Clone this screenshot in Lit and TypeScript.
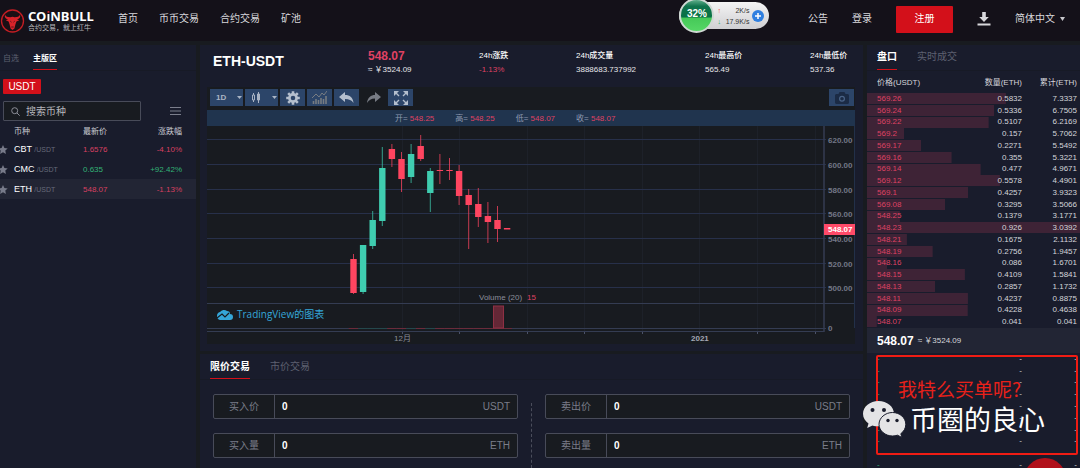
import { LitElement, html, svg, css } from "lit";
import { customElement } from "lit/decorators.js";
import { classMap } from "lit/directives/class-map.js";
import { styleMap } from "lit/directives/style-map.js";

const shared = css`
  * {
    box-sizing: border-box;
  }
  a {
    color: inherit;
    text-decoration: none;
  }
  button,
  input,
  select {
    font: inherit;
    color: inherit;
    background: none;
    border: 0;
    margin: 0;
    padding: 0;
    border-radius: 0;
    outline: none;
  }
  select {
    appearance: none;
  }
  table {
    border-collapse: collapse;
    width: 100%;
  }
  th {
    font-weight: 400;
  }
  svg {
    display: block;
    flex: none;
  }
  .tabs {
    display: flex;
    height: 26px;
    border-bottom: 1px solid #171a26;
  }
  .tab {
    height: 25px;
    color: #5d6070;
    white-space: nowrap;
    border-bottom: 1px solid transparent;
  }
  .tab.on {
    color: #fff;
    font-weight: 700;
    border-color: #d3101a;
  }
  .up {
    color: #33b276;
  }
  .down {
    color: #df4263;
  }
`;

@customElement("top-bar")
class TopBar extends LitElement {
  static styles = [
    shared,
    css`
      :host {
        display: flex;
        align-items: center;
        height: 41px;
        padding-right: 15px;
        background: #141119;
        color: #d8d8dc;
        font-size: 10px;
        line-height: 14px;
        white-space: nowrap;
        position: relative;
      }
      .brand {
        display: flex;
        align-items: center;
        gap: 3px;
        width: 118px;
        color: #fff;
      }
      .name {
        display: block;
        font: 700 13px/14px "Noto Sans", sans-serif;
      }
      .i {
        color: transparent;
        background: linear-gradient(#e0202a 6px, #fff 6px);
        background-clip: text;
        -webkit-background-clip: text;
      }
      .slogan {
        display: block;
        color: #b9b9bd;
        font-size: 7px;
        line-height: 10px;
      }
      nav {
        display: flex;
        gap: 21px;
        flex: 1;
        padding-bottom: 4px;
      }
      .tools {
        display: flex;
        align-items: center;
        gap: 24px;
        padding-bottom: 3px;
      }
      .join {
        width: 57px;
        height: 27px;
        background: #d3101a;
        color: #fff;
        border-radius: 1px;
      }
      .lang {
        display: flex;
        align-items: center;
        gap: 5px;
      }
      .meter {
        position: absolute;
        left: calc(63% - 1px);
        top: 2px;
        width: 90px;
        height: 27px;
        border-radius: 14px;
        background: linear-gradient(#f4f4f4, #cfcfd2);
        display: flex;
        align-items: center;
        gap: 3px;
        padding-right: 5px;
        color: #333;
        font-size: 7px;
        line-height: 11px;
      }
      .ball {
        width: 35px;
        height: 35px;
        flex: none;
        margin: -4px 0;
        border-radius: 50%;
        border: 2px solid #cfd8d3;
        background: linear-gradient(#5fae8b 0, #10744d 20%, #087045 56%, #45c858 57%, #55d765 100%);
        color: #fff;
        font-size: 10px;
        font-weight: 700;
        line-height: 27px;
        text-align: center;
      }
      .speed {
        flex: 1;
        display: grid;
        grid-template-columns: auto 1fr;
        text-align: right;
      }
      .red {
        color: #ef4136;
      }
      .green {
        color: #1fae57;
      }
    `,
  ];
  render() {
    return html`
      <a class="brand" href="#">
        <svg width="25" height="26" viewBox="0 0 25 26">
          <circle cx="12.5" cy="13" r="11" fill="#1b0f14" stroke="#c41e24" stroke-width="1.3" />
          <path
            fill="#d8232a"
            d="M5 6.500C4.300 9.500 5.400 10.800 8 11.200L5.800 12.200 8.600 13.400 9.600 16.600 10.600 20.400 12.500 22 14.400 20.400 15.400 16.600 16.400 13.400 19.200 12.200 17 11.200C19.600 10.800 20.700 9.500 20 6.500 19.400 8.600 17.500 9.200 14.800 9.200L12.500 8.800 10.200 9.200C7.500 9.200 5.600 8.600 5 6.500Z"
          />
          <path d="M10.300 13.200l1.200 1M14.700 13.200l-1.200 1M11.300 19h2.400" stroke="#1b0f14" stroke-width=".7" />
        </svg>
        <span><span class="name">CO<span class="i">i</span>NBULL</span><span class="slogan">合约交易，就上红牛</span></span>
      </a>
      <nav>
        <a href="#">首页</a><a href="#">币币交易</a><a href="#">合约交易</a><a href="#">矿池</a>
      </nav>
      <div class="tools">
        <a href="#">公告</a><a href="#">登录</a>
        <button class="join">注册</button>
        <button aria-label="下载">
          <svg width="14" height="14" viewBox="0 0 14 14" fill="#d8d8dc">
            <path d="M5.200 0h3.600v5h3L7 10 2.200 5h3zM.5 11.500h13v2H.5z" />
          </svg>
        </button>
        <label class="lang">
          <select aria-label="语言"><option>简体中文</option></select>
          <svg width="5" height="4" viewBox="0 0 5 4"><path d="M0 0h5L2.500 4z" fill="#c8c8cc" /></svg>
        </label>
      </div>
      <div class="meter">
        <span class="ball">32%</span>
        <span class="speed"
          ><b class="red">↑</b><span>2K/s</span><b class="green">↓</b><span>17.9K/s</span></span
        >
        <svg width="12" height="12" viewBox="0 0 12 12">
          <circle cx="6" cy="6" r="6" fill="#2f7fe0" />
          <path d="M6 3v6M3 6h6" stroke="#fff" stroke-width="1.500" />
        </svg>
      </div>
    `;
  }
}

const coins = [
  { name: "CBT", price: "1.6576", change: "-4.10%", tone: "down" },
  { name: "CMC", price: "0.635", change: "+92.42%", tone: "up" },
  { name: "ETH", price: "548.07", change: "-1.13%", tone: "down" },
];

@customElement("market-list")
class MarketList extends LitElement {
  static styles = [
    shared,
    css`
      :host {
        display: block;
        background: #191c2c;
        font-size: 8px;
      }
      .tabs {
        padding-left: 3px;
        gap: 14px;
      }
      .quote {
        display: block;
        margin: 8px 3px 7px;
        width: 38px;
        height: 15px;
        background: #d3101a;
        color: #fff;
        font-size: 10px;
        line-height: 15px;
        border-radius: 1px;
      }
      .find {
        display: flex;
        justify-content: space-between;
        align-items: center;
        padding: 0 15px 0 3px;
      }
      .box {
        display: flex;
        align-items: center;
        gap: 6px;
        width: 138px;
        height: 20px;
        padding: 0 7px;
        border: 1px solid #484b59;
        border-radius: 1px;
        background: #181b20;
        font-size: 10px;
      }
      .box input {
        width: 100px;
      }
      .box input::placeholder {
        color: #b5b6bb;
        opacity: 1;
      }
      table {
        table-layout: fixed;
      }
      tr {
        height: 20px;
      }
      thead tr {
        height: 18px;
      }
      td,
      th {
        padding: 0;
        text-align: left;
        color: #c9cad0;
      }
      .star {
        width: 14px;
      }
      .coin {
        width: 69px;
      }
      td.up {
        color: #33b276;
      }
      td.down {
        color: #d84061;
      }
      .change {
        text-align: right;
        padding-right: 14px;
      }
      .sym {
        font-size: 9px;
        color: #fff;
      }
      .unit {
        font-size: 7px;
        color: #666a7a;
      }
      .current {
        background: #222534;
      }
    `,
  ];
  render() {
    return html`
      <div class="tabs"><button class="tab">自选</button><button class="tab on">主版区</button></div>
      <button class="quote">USDT</button>
      <div class="find">
        <label class="box">
          <svg width="9" height="9" viewBox="0 0 9 9" fill="none" stroke="#8b8d97">
            <circle cx="3.700" cy="3.700" r="3" />
            <path d="M6 6l2.700 2.700" />
          </svg>
          <input placeholder="搜索币种" aria-label="搜索币种" />
        </label>
        <button aria-label="菜单">
          <svg width="11" height="8" viewBox="0 0 11 8"><path d="M0 .5h11M0 4h11M0 7.500h11" stroke="#7b7e8c" /></svg>
        </button>
      </div>
      <table>
        <thead>
          <tr>
            <th class="star"></th>
            <th class="coin">币种</th>
            <th>最新价</th>
            <th class="change">涨跌幅</th>
          </tr>
        </thead>
        <tbody>
          ${coins.map(
            (c) => html`<tr class=${classMap({ current: c.name === "ETH" })}>
              <td class="star">
                <svg width="8" height="9" viewBox="2 0 8 9">
                  <path d="M5 0l1.400 3 3.300.4-2.400 2.200.6 3.300L5 7.300 2.100 8.900l.6-3.300L.3 3.400 3.600 3z" fill="#777a89" />
                </svg>
              </td>
              <td><span class="sym">${c.name}</span> <span class="unit">/USDT</span></td>
              <td class=${c.tone}>${c.price}</td>
              <td class="change ${c.tone}">${c.change}</td>
            </tr>`
          )}
        </tbody>
      </table>
    `;
  }
}

// [open/close top, bottom, wick top, wick bottom, rising]
const candles: [number, number, number, number, boolean][] = [
  [133, 167, 128, 168, false],
  [119, 166, 119, 168, true],
  [94, 120, 85, 123, true],
  [42, 95, 21, 100, true],
  [23, 33, 18, 41, false],
  [33, 53, 26, 66, false],
  [28, 51, 18, 57, true],
  [20, 33, 9, 35, false],
  [45, 67, 42, 86, true],
  [44, 45, 28, 58, false],
  [44, 45, 32, 54, false],
  [45, 70, 39, 79, false],
  [69, 79, 63, 123, false],
  [78, 91, 62, 101, false],
  [90, 96, 76, 117, false],
  [94, 103, 80, 116, false],
  [102, 103.5, 102, 103, false],
];
const levels: [string, number][] = [
  ["620.00", 14],
  ["600.00", 39],
  ["580.00", 64],
  ["560.00", 88],
  ["540.00", 113],
  ["520.00", 138],
  ["500.00", 162],
];
const ticks = [195, 252, 320, 377, 435, 492, 550, 608];

@customElement("price-chart")
class PriceChart extends LitElement {
  static styles = [
    shared,
    css`
      :host {
        display: block;
        background: #181b20;
        font-size: 8px;
      }
      .bar {
        display: flex;
        align-items: center;
        gap: 2px;
        height: 23px;
        padding: 0 1px 2px 3px;
      }
      .btn {
        display: flex;
        align-items: center;
        justify-content: center;
        width: 25px;
        height: 17px;
        background: #2c4569;
        color: #aab4c4;
      }
      .wide {
        width: 33px;
        justify-content: space-between;
        padding: 0 1px 0 6px;
      }
      .wide select {
        width: 18px;
        font-weight: 700;
      }
      .plain {
        background: none;
      }
      .last {
        margin-left: auto;
      }
      .legend {
        display: flex;
        gap: 21px;
        height: 16px;
        padding-left: 29%;
        line-height: 18px;
        background: #20344e;
        color: #8f9bb0;
        white-space: nowrap;
      }
      .plot {
        width: 100%;
        height: auto;
      }
      .axis {
        fill: #737787;
        font-weight: 700;
      }
      .year {
        fill: #a4a8b4;
        font-weight: 700;
      }
      .tag {
        fill: #fff;
        font-weight: 700;
      }
      .note {
        fill: #8b8e9a;
      }
      .hot {
        fill: #df4263;
      }
      .tv {
        fill: #35a6d8;
        font: 10px "Open Sans", "Noto Sans CJK SC", sans-serif;
      }
    `,
  ];
  private caret = () =>
    html`<svg width="5" height="3" viewBox="0 0 5 3"><path d="M0 0h5L2.500 3z" fill="#aab4c4" /></svg>`;
  render() {
    return html`
      <div class="bar">
        <label class="btn wide"><select aria-label="周期"><option>1D</option></select>${this.caret()}</label>
        <button class="btn wide" aria-label="图表类型">
          <svg width="10" height="11" viewBox="0 0 10 11" stroke="#aab4c4">
            <path d="M2.500 1v9M7.500 0v11" />
            <path d="M1.500 3h2v5h-2z" fill="#2c4569" />
            <path d="M6.500 2h2v6h-2z" fill="#aab4c4" />
          </svg>
          ${this.caret()}
        </button>
        <button class="btn" aria-label="设置">
          <svg width="14" height="14" viewBox="-7 -7 14 14">
            <circle r="3.600" fill="none" stroke="#b4bfce" stroke-width="2.600" />
            ${[0, 45, 90, 135].map(
              (a) => svg`<path d="M0-6.800v2.800M0 4v2.800" stroke="#b4bfce" stroke-width="2.600" transform="rotate(${a})"/>`
            )}
          </svg>
        </button>
        <button class="btn" aria-label="指标">
          <svg width="15" height="13" viewBox="0 0 15 13" fill="none" stroke="#777c82">
            <path d="M1.500 13v-3M4 13V8M6.500 13V9M9 13V7M11.500 13V8M14 13V5" stroke-width="1.600" />
            <path d="M0 7l4-4 3 3 3-4 2 2 3-4" />
          </svg>
        </button>
        <button class="btn" aria-label="撤销">
          <svg width="15" height="11" viewBox="0 0 15 11"><path d="M6 0v3c5 0 8 2.500 8.500 8C12.500 8 10 7 6 7v3L0 5z" fill="#b4bfce" /></svg>
        </button>
        <button class="btn plain" aria-label="重做">
          <svg width="14" height="11" viewBox="0 0 14 11"><path d="M8 0v3C4 3 .6 5.500 0 11c2-3 4-4.500 8-4.500V10l6-5z" fill="#777b84" /></svg>
        </button>
        <button class="btn" aria-label="全屏">
          <svg width="14" height="14" viewBox="0 0 14 14" fill="#b4bfce" stroke="#b4bfce" stroke-width="1.400">
            <path d="M0 0h5L0 5zM14 0v5L9 0zM0 14V9l5 5zM14 14H9l5-5z" stroke="none" />
            <path d="M2 2l3 3M12 2L9 5M2 12l3-3M12 12L9 9" />
          </svg>
        </button>
        <button class="btn last" aria-label="截图">
          <svg width="14" height="12" viewBox="0 0 14 12">
            <path d="M4.500 0h5l1 2H13l1 1v8l-1 1H1l-1-1V3l1-1h2.500z" fill="#1b2b45" />
            <circle cx="7" cy="6.700" r="2.400" fill="none" stroke="#4a6387" stroke-width="1.200" />
          </svg>
        </button>
      </div>
      <div class="legend">
        ${[["开", "548.25"], ["高", "548.25"], ["低", "548.07"], ["收", "548.07"]].map(
          ([k, v]) => html`<span>${k}= <span class="down">${v}</span></span>`
        )}
      </div>
      <svg class="plot" viewBox="0 0 648 218">
        ${ticks.map(
          (x) => svg`<path d="M${x + 0.5} 0V205" stroke="#1d2129"/><path d="M${x + 0.5} 205v3" stroke="#4b5268"/>`
        )}
        ${levels.map(
          ([t, y]) => svg`<path d="M0 ${y - 0.5}H619" stroke="#27304a"/>
            <text class="axis" x="621" y="${y + 3}">${t}</text>`
        )}
        <path d="M0 177.500H648M0 202.500H619M0 205.500H617" stroke="#343c52" fill="none" />
        <path d="M617 0V206" stroke="#343c52" stroke-width="1.500" />
        <path d="M647.500 0V202" stroke="#223049" />
        <text class="axis" x="621" y="205">0</text>
        ${candles.map(([t, b, h, l, up], i) => {
          const x = 146.5 + i * 9.6;
          const c = up ? "#3fcdb0" : "#ff4560";
          return svg`<path d="M${x} ${h}V${l}" stroke="${c}" stroke-opacity=".75"/>
            <rect x="${x - 3.2}" y="${t}" width="6.400" height="${b - t}" fill="${c}"/>
            <path d="M${x - 4.8} 202.500h9.600" stroke="${up ? "#24484c" : "#6b2b3b"}"/>`;
        })}
        <rect x="286.500" y="180" width="10" height="22" fill="#642736" stroke="#8f3044" />
        <rect x="617" y="98" width="31" height="11" fill="#ff4a68" />
        <text class="tag" x="621" y="106">548.07</text>
        <text class="note" x="272" y="174">Volume (20)</text>
        <text class="hot" x="320" y="174">15</text>
        <path d="M10 190a4 4 0 0 1 3-4 5 5 0 0 1 7-1 3 3 0 0 1 3 3 3 3 0 0 1 0 6H13a4 4 0 0 1-3-4z" fill="#35a6d8" />
        <path d="M10 192l5-4 3 3 4-4" fill="none" stroke="#181b20" stroke-width="1.200" />
        <a href="#"><text class="tv" x="30" y="192">TradingView的图表</text></a>
        <text class="note" x="187" y="215">12月</text>
        <text class="year" x="484" y="215">2021</text>
      </svg>
    `;
  }
}

const stats = [
  ["24h涨跌", "-1.13%"],
  ["24h成交量", "3888683.737992"],
  ["24h最高价", "565.49"],
  ["24h最低价", "537.36"],
];
const sides = [
  { id: "buy", fields: [["买入价", "USDT"], ["买入量", "ETH"]] },
  { id: "sell", fields: [["卖出价", "USDT"], ["卖出量", "ETH"]] },
];

@customElement("trade-desk")
class TradeDesk extends LitElement {
  static styles = [
    shared,
    css`
      :host {
        display: grid;
        grid-template-rows: auto 1fr;
        gap: 3px;
        min-width: 0;
      }
      .panel {
        background: #191c2c;
      }
      .market {
        padding: 0 8px 7px 7px;
      }
      .head {
        display: grid;
        grid-template-columns: 155fr 111fr 97fr 129fr 105fr 45fr;
        height: 42px;
        padding: 4px 0 0 6px;
        font-size: 8px;
        line-height: 14px;
        color: #e6e6ea;
        white-space: nowrap;
      }
      .pair {
        margin: 0;
        font-size: 14px;
        line-height: 25px;
        color: #fff;
      }
      .head > div > * {
        display: block;
      }
      .last {
        font-size: 12px;
        font-weight: 700;
      }
      .key {
        font-weight: 500;
        color: #fff;
      }
      .tabs {
        padding-left: 10px;
        gap: 20px;
        font-size: 10px;
        line-height: 26px;
      }
      .forms {
        display: grid;
        grid-template-columns: 1fr 1px 1fr;
        gap: 13px;
        padding: 14px 13px 10px;
        font-size: 10px;
      }
      .side {
        display: grid;
        gap: 14px;
        align-content: start;
      }
      .rule {
        margin: 9px 0 -10px;
        border-left: 1px dashed #4a4d5b;
      }
      .field {
        display: grid;
        grid-template-columns: 61px 1fr auto;
        align-items: center;
        height: 25px;
        padding-right: 7px;
        border: 1px solid #484b59;
        border-radius: 2px;
        background: #181b20;
        color: #7a7d89;
      }
      .field label {
        line-height: 23px;
        text-align: center;
        border-right: 1px solid #484b59;
      }
      .field input {
        min-width: 0;
        padding-left: 7px;
        color: #fff;
        font-weight: 700;
      }
    `,
  ];
  render() {
    return html`
      <section class="panel market">
        <div class="head">
          <h1 class="pair">ETH-USDT</h1>
          <div><span class="last down">548.07</span><span>≈ ￥3524.09</span></div>
          ${stats.map(
            ([k, v], i) => html`<div>
              <span class="key">${k}</span><span class=${classMap({ down: i === 0 })}>${v}</span>
            </div>`
          )}
        </div>
        <price-chart></price-chart>
      </section>
      <section class="panel">
        <div class="tabs"><button class="tab on">限价交易</button><button class="tab">市价交易</button></div>
        <form class="forms">
          ${sides.map(
            (s, n) => html`${n ? html`<div class="rule"></div>` : ""}
              <div class="side">
                ${s.fields.map(
                  ([label, unit], i) => html`<div class="field">
                    <label for="${s.id}${i}">${label}</label>
                    <input id="${s.id}${i}" value="0" />
                    <span>${unit}</span>
                  </div>`
                )}
              </div>`
          )}
        </form>
      </section>
    `;
  }
}

const asks = [
  ["569.26", "0.5832", "7.3337"],
  ["569.24", "0.5336", "6.7505"],
  ["569.22", "0.5107", "6.2169"],
  ["569.2", "0.157", "5.7062"],
  ["569.17", "0.2271", "5.5492"],
  ["569.16", "0.355", "5.3221"],
  ["569.14", "0.477", "4.9671"],
  ["569.12", "0.5578", "4.4901"],
  ["569.1", "0.4257", "3.9323"],
  ["569.08", "0.3295", "3.5066"],
  ["548.25", "0.1379", "3.1771"],
  ["548.23", "0.926", "3.0392"],
  ["548.21", "0.1675", "2.1132"],
  ["548.19", "0.2756", "1.9457"],
  ["548.16", "0.086", "1.6701"],
  ["548.15", "0.4109", "1.5841"],
  ["548.13", "0.2857", "1.1732"],
  ["548.11", "0.4237", "0.8875"],
  ["548.09", "0.4228", "0.4638"],
  ["548.07", "0.041", "0.041"],
];

@customElement("order-book")
class OrderBook extends LitElement {
  static styles = [
    shared,
    css`
      :host {
        display: block;
        position: relative;
        background: #191c2c;
        color: #d4d5da;
        font-size: 8px;
        line-height: 10px;
        white-space: nowrap;
      }
      .tabs {
        padding-left: 10px;
        gap: 20px;
        font-size: 10px;
      }
      table {
        table-layout: fixed;
      }
      th,
      td {
        padding: 0;
        text-align: right;
      }
      .asks {
        height: 257px;
      }
      .asks thead tr {
        height: 22px;
      }
      th {
        padding-top: 2px;
      }
      .price {
        width: 70px;
        padding-left: 10px;
        text-align: left;
      }
      .total {
        width: 58px;
        padding-right: 3px;
      }
      .row {
        background: linear-gradient(#3e2336, #3e2336) no-repeat;
        background-size: var(--depth) calc(100% - 1px);
      }
      .now {
        display: flex;
        align-items: center;
        gap: 4px;
        height: 25px;
        padding-left: 10px;
        background: #222534;
      }
      .now b {
        color: #fff;
        font-size: 12px;
      }
      .bids {
        height: 118px;
      }
      .clip {
        position: absolute;
        inset: 308px 0 0 -5px;
        overflow: hidden;
        pointer-events: none;
      }
      .frame {
        position: absolute;
        left: 14px;
        right: 2px;
        top: 2px;
        height: 100px;
        border: 2px solid #f01c14;
        border-radius: 2px;
      }
      .ask {
        position: absolute;
        left: 36px;
        top: 23px;
        color: #e8211a;
        font: 19px/26px "Noto Sans CJK SC", sans-serif;
      }
      .mark {
        position: absolute;
        left: 1px;
        top: 45px;
        display: flex;
        align-items: center;
        gap: 4px;
        color: #fff;
        font: 27px/42px "Noto Sans CJK SC", sans-serif;
      }
      .dot {
        position: absolute;
        right: 14px;
        top: 105px;
        width: 42px;
        height: 42px;
        border-radius: 50%;
        background: #b1111b;
      }
    `,
  ];
  render() {
    return html`
      <div class="tabs"><button class="tab on">盘口</button><button class="tab">实时成交</button></div>
      <table class="asks">
        <thead>
          <tr>
            <th class="price">价格(USDT)</th>
            <th>数量(ETH)</th>
            <th class="total">累计(ETH)</th>
          </tr>
        </thead>
        <tbody>
          ${asks.map(
            ([p, q, t]) => html`<tr class="row" style=${styleMap({ "--depth": `${Math.min(100, Number(q) * 111.8)}%` })}>
              <td class="price down">${p}</td>
              <td>${q}</td>
              <td class="total">${t}</td>
            </tr>`
          )}
        </tbody>
      </table>
      <div class="now"><b>548.07</b><span>≈ ￥3524.09</span></div>
      <table class="bids">
        <tbody>
          ${Array.from(
            { length: 10 },
            () => html`<tr>
              <td class="price up">-</td>
              <td>-</td>
              <td class="total">-</td>
            </tr>`
          )}
        </tbody>
      </table>
      <div class="clip">
        <div class="frame"></div>
        <div class="ask">我特么买单呢?</div>
        <div class="dot"></div>
        <div class="mark">
          <svg width="43" height="38" viewBox="0 0 43 38" fill="#e4e4e6">
            <path d="M15.500 1C7 1 0 6.500 0 13.800c0 4 2.200 7.400 5.500 9.700L4.200 28l5.300-2.600c2 .6 4 .8 6.500.8C24 26 31 20.800 31 13.800 31 6.500 24 1 15.500 1z" />
            <path
              stroke="#191c2c"
              d="M29.500 12.500C22.300 12.500 16 17.800 16 24.300S22.300 36 29.500 36c1.800 0 3.400-.3 5-.8l4.500 2.300-1.200-3.800c3-2.200 5-5.500 5-9.400 0-6.500-6-11.800-13.300-11.800z"
            />
            <g fill="#191c2c">
              <circle cx="9.500" cy="10" r="2" /><circle cx="21" cy="10" r="2" />
              <circle cx="25" cy="20.500" r="1.700" /><circle cx="34" cy="20.500" r="1.700" />
            </g>
          </svg>
          <span>币圈的良心</span>
        </div>
      </div>
    `;
  }
}

@customElement("app-root")
class AppRoot extends LitElement {
  static styles = css`
    :host {
      display: grid;
      grid-template-rows: auto 1fr;
      gap: 4px;
      height: 100vh;
      overflow: hidden;
      background: #181b20;
      font-family: "Liberation Sans", "Noto Sans CJK SC", sans-serif;
    }
    main {
      display: grid;
      grid-template-columns: 196px 1fr 213px;
      gap: 4px;
      min-height: 0;
    }
  `;
  render() {
    return html`
      <top-bar></top-bar>
      <main>
        <market-list></market-list>
        <trade-desk></trade-desk>
        <order-book></order-book>
      </main>
    `;
  }
}
